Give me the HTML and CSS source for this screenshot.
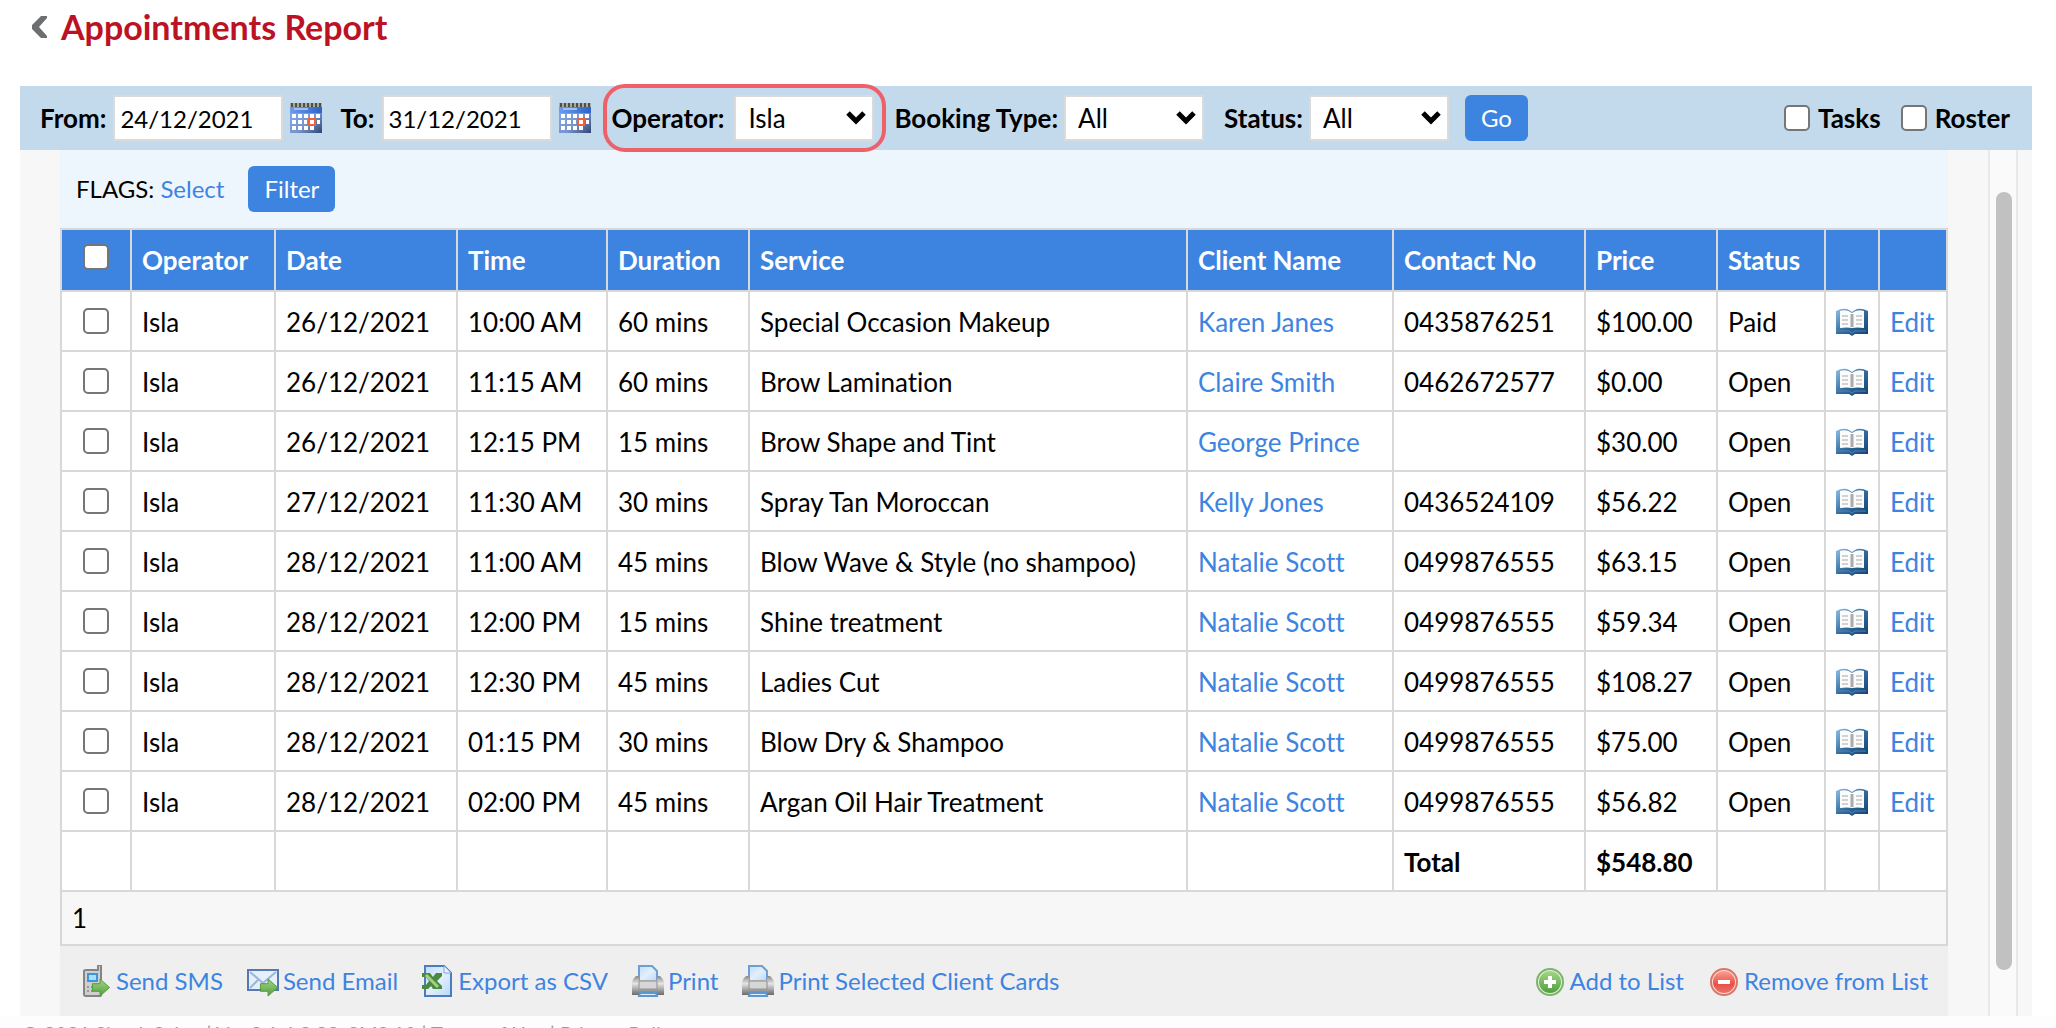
FILE: index.html
```html
<!DOCTYPE html>
<html lang="en">
<head>
    <meta charset="UTF-8">
    <meta name="viewport" content="width=device-width, initial-scale=1.0">
    <title>Appointments Report</title>
    <link rel="stylesheet" href="styles.css">
</head>
<body>
    <!-- shared icons -->
    <svg class="sprite" aria-hidden="true">
        <defs>
            <linearGradient id="g-blue" x1="0" y1="0" x2="1" y2="1">
                <stop offset="0" stop-color="#8fc0ea"/>
                <stop offset="0.5" stop-color="#346c9f"/>
                <stop offset="1" stop-color="#123f70"/>
            </linearGradient>
            <linearGradient id="g-cal" x1="0" y1="0" x2="1" y2="1">
                <stop offset="0" stop-color="#7fb0f0"/>
                <stop offset="0.6" stop-color="#7893cc"/>
                <stop offset="1" stop-color="#2f4573"/>
            </linearGradient>
            <linearGradient id="g-top" x1="0" y1="0" x2="1" y2="0">
                <stop offset="0" stop-color="#6c9cee"/>
                <stop offset="1" stop-color="#2c62cc"/>
            </linearGradient>
            <linearGradient id="g-page" x1="0" y1="0" x2="1" y2="1">
                <stop offset="0" stop-color="#c2dcf8"/>
                <stop offset="0.5" stop-color="#e2effd"/>
                <stop offset="1" stop-color="#b9d8f6"/>
            </linearGradient>
            <linearGradient id="g-grey" x1="0" y1="0" x2="0" y2="1">
                <stop offset="0" stop-color="#8a8a8a"/>
                <stop offset="0.4" stop-color="#e4e4e4"/>
                <stop offset="1" stop-color="#6a6a6a"/>
            </linearGradient>
            <linearGradient id="g-green" x1="0" y1="0" x2="0" y2="1">
                <stop offset="0" stop-color="#a5d685"/>
                <stop offset="1" stop-color="#4f9e40"/>
            </linearGradient>
            <linearGradient id="g-red" x1="0" y1="0" x2="0" y2="1">
                <stop offset="0" stop-color="#f8a090"/>
                <stop offset="0.6" stop-color="#ea4f48"/>
                <stop offset="1" stop-color="#e8746a"/>
            </linearGradient>
        </defs>
        <symbol id="i-calendar" viewBox="0 0 32 32">
            <rect y="2" width="32" height="29" fill="url(#g-cal)"/>
            <rect y="4" width="32" height="7" fill="url(#g-top)"/>
            <path d="M4 7h14" stroke="#9dc0f8" stroke-width="2"/>
            <path d="M0 3h32" stroke="#a9aba0" stroke-width="4"/>
            <path d="M1 3h31" stroke="#4d4f4c" stroke-width="4" stroke-dasharray="2 2"/>
            <path d="M2 14h4M8 14h4M14 14h4M20 14h4M26 14h4M2 20h4M8 20h4M14 20h3M27 20h3M2 26h4M8 26h4M14 26h4M20 26h4" stroke="#fff" stroke-width="4"/>
            <rect x="19" y="17" width="6" height="6" fill="#fff" stroke="#f0603c" stroke-width="2"/>
        </symbol>
        <symbol id="i-book" viewBox="0 0 32 28">
            <path d="M0 3q8-4 13-1l3 2 3-2q5-3 13 1v23H19l-3 2-3-2H0z" fill="url(#g-blue)"/>
            <path d="M4 3q7-2 12 2 5-4 12-2v17q-7-1-12 0-5-1-12 0z" fill="#fbfbfb"/>
            <path d="M16 6v13" stroke="#aaa" stroke-width="3"/>
            <path d="M6 8h6M6 12h6M6 16h6M20 8h6M20 12h6M20 16h6" stroke="#d2d2d2" stroke-width="2"/>
            <path d="M2 23h11l3 2 3-2h11" fill="none" stroke="#4f83b4" stroke-width="1"/>
        </symbol>
        <symbol id="i-arrow" viewBox="0 0 20 20">
            <path d="M1 6h8V1l10 9-10 9v-5H1z" fill="url(#g-green)" stroke="#4f9a3c" stroke-width="1"/>
        </symbol>
        <symbol id="i-sms" viewBox="0 0 32 32">
            <path d="M4 6q0-1 2-1h12V0h3v30q0 1-2 1H6q-2 0-2-2z" fill="#cfcfcf" stroke="#858585" stroke-width="2"/>
            <rect x="8" y="9" width="9" height="7" fill="#a6defc" stroke="#3a97df" stroke-width="2"/>
            <path d="M7 22h2M7 26h2M11 22h2M11 26h2" stroke="#999" stroke-width="2"/>
            <use href="#i-arrow" x="11" y="13" width="20" height="19"/>
        </symbol>
        <symbol id="i-email" viewBox="0 0 32 32">
            <rect x="1" y="5" width="30" height="20" fill="#e4f0fc" stroke="#5678b4" stroke-width="2"/>
            <path d="M3 7l13 11L29 7M3 23l9-9M29 23l-9-9" fill="none" stroke="#9db6d8" stroke-width="2"/>
            <use href="#i-arrow" x="12" y="13" width="20" height="19"/>
        </symbol>
        <symbol id="i-excel" viewBox="0 0 32 32">
            <path d="M3 1h19l7 7v23H3z" fill="url(#g-page)" stroke="#4a7cbf" stroke-width="2"/>
            <path d="M22 1v7h7" fill="#e8f3fe" stroke="#7ba6dc" stroke-width="1"/>
            <path d="M0 8h8l3 4 3-4h6v3l-5 5 5 5v3h-9l-2-3-3 3H0v-4h4l3-4-3-4H0z" fill="#4a8a3c"/>
            <path d="M4 10l12 12" stroke="#a5cf8a" stroke-width="3"/>
        </symbol>
        <symbol id="i-print" viewBox="0 0 32 32">
            <path d="M7 16V1h13l5 5v10z" fill="url(#g-page)" stroke="#6b9fd6" stroke-width="2"/>
            <path d="M4 11h3v4h18v-4h3q4 3 4 8v11H0V19q0-5 4-8z" fill="url(#g-grey)"/>
            <path d="M7 16h18v8H7z" fill="#d6d6d6" stroke="#909090" stroke-width="1"/>
            <path d="M8 28h16l1 3H7z" fill="#e3f0fc" stroke="#5b95d2" stroke-width="2"/>
        </symbol>
        <symbol id="i-add" viewBox="0 0 32 32">
            <circle cx="16" cy="17" r="13" fill="#e4f2dc" stroke="#7cb46e" stroke-width="2"/>
            <circle cx="16" cy="17" r="11" fill="url(#g-green)"/>
            <path d="M16 11v12M10 17h12" stroke="#fff" stroke-width="4"/>
        </symbol>
        <symbol id="i-remove" viewBox="0 0 32 32">
            <circle cx="16" cy="17" r="13" fill="#fbdcd6" stroke="#d8766c" stroke-width="2"/>
            <circle cx="16" cy="17" r="11" fill="url(#g-red)"/>
            <path d="M10 17h12" stroke="#fff" stroke-width="4"/>
        </symbol>
    </svg>

    <header class="page-head">
        <a class="back" href="#" aria-label="Back">
            <svg width="15" height="22" viewBox="0 0 15 22"><path d="M9 0h6v2L7 11l8 9v2H9L0 13V9z" fill="#6d6f71"/></svg>
        </a>
        <h1>Appointments Report</h1>
    </header>

    <form class="filter-bar">
        <div class="field date-field">
            <label for="from">From:</label>
            <input type="text" id="from" value="24/12/2021">
            <svg class="calendar"><use href="#i-calendar"/></svg>
        </div>
        <div class="field date-field">
            <label for="to">To:</label>
            <input type="text" id="to" value="31/12/2021">
            <svg class="calendar"><use href="#i-calendar"/></svg>
        </div>
        <div class="field ringed">
            <label for="operator">Operator:</label>
            <select id="operator"><option>Isla</option></select>
        </div>
        <div class="field booking">
            <label for="booking">Booking Type:</label>
            <select id="booking"><option>All</option></select>
        </div>
        <div class="field status">
            <label for="status">Status:</label>
            <select id="status"><option>All</option></select>
        </div>
        <button type="button" class="btn">Go</button>
        <div class="toggles">
            <label><input type="checkbox"> Tasks</label>
            <label><input type="checkbox"> Roster</label>
        </div>
    </form>

    <div class="panel">
        <main class="content">
            <div class="flags">
                <span>FLAGS: <a href="#">Select</a></span>
                <button type="button" class="btn">Filter</button>
            </div>

            <table class="report">
                <colgroup>
                    <col class="c-check">
                    <col class="c-operator">
                    <col class="c-date">
                    <col class="c-time">
                    <col class="c-duration">
                    <col>
                    <col class="c-client">
                    <col class="c-contact">
                    <col class="c-price">
                    <col class="c-status">
                    <col class="c-book">
                    <col class="c-edit">
                </colgroup>
                <thead>
                    <tr>
                        <th><input type="checkbox" aria-label="Select all"></th>
                        <th>Operator</th>
                        <th>Date</th>
                        <th>Time</th>
                        <th>Duration</th>
                        <th>Service</th>
                        <th>Client Name</th>
                        <th>Contact No</th>
                        <th>Price</th>
                        <th>Status</th>
                        <th></th>
                        <th></th>
                    </tr>
                </thead>
                <tbody id="rows"></tbody>
                <tfoot>
                    <tr class="total">
                        <td></td><td></td><td></td><td></td><td></td><td></td><td></td>
                        <td>Total</td>
                        <td>$548.80</td>
                        <td></td><td></td><td></td>
                    </tr>
                    <tr class="pager">
                        <td colspan="12">1</td>
                    </tr>
                </tfoot>
            </table>

            <div class="actions">
                <a href="#"><svg><use href="#i-sms"/></svg>Send SMS</a>
                <a href="#"><svg><use href="#i-email"/></svg>Send Email</a>
                <a href="#"><svg><use href="#i-excel"/></svg>Export as CSV</a>
                <a href="#"><svg><use href="#i-print"/></svg>Print</a>
                <a href="#"><svg><use href="#i-print"/></svg>Print Selected Client Cards</a>
                <div class="list-actions">
                    <a href="#"><svg><use href="#i-add"/></svg>Add to List</a>
                    <a href="#"><svg><use href="#i-remove"/></svg>Remove from List</a>
                </div>
            </div>
        </main>
        <div class="scroll-track"><div class="scroll-thumb"></div></div>
    </div>

    <footer class="page-foot">© 2021 SimpleSalon | Ver 2.1.6.2.22_SMS.10 | Terms of Use | Privacy Policy</footer>

    <script>
        const appointments = [
            ['26/12/2021', '10:00 AM', '60 mins', 'Special Occasion Makeup', 'Karen Janes', '0435876251', '$100.00', 'Paid'],
            ['26/12/2021', '11:15 AM', '60 mins', 'Brow Lamination', 'Claire Smith', '0462672577', '$0.00', 'Open'],
            ['26/12/2021', '12:15 PM', '15 mins', 'Brow Shape and Tint', 'George Prince', '', '$30.00', 'Open'],
            ['27/12/2021', '11:30 AM', '30 mins', 'Spray Tan Moroccan', 'Kelly Jones', '0436524109', '$56.22', 'Open'],
            ['28/12/2021', '11:00 AM', '45 mins', 'Blow Wave &amp; Style (no shampoo)', 'Natalie Scott', '0499876555', '$63.15', 'Open'],
            ['28/12/2021', '12:00 PM', '15 mins', 'Shine treatment', 'Natalie Scott', '0499876555', '$59.34', 'Open'],
            ['28/12/2021', '12:30 PM', '45 mins', 'Ladies Cut', 'Natalie Scott', '0499876555', '$108.27', 'Open'],
            ['28/12/2021', '01:15 PM', '30 mins', 'Blow Dry &amp; Shampoo', 'Natalie Scott', '0499876555', '$75.00', 'Open'],
            ['28/12/2021', '02:00 PM', '45 mins', 'Argan Oil Hair Treatment', 'Natalie Scott', '0499876555', '$56.82', 'Open']
        ]

        document.getElementById('rows').innerHTML = appointments.map(([date, time, duration, service, client, contact, price, status]) => `
            <tr>
                <td><input type="checkbox" aria-label="Select ${client}"></td>
                <td>Isla</td>
                <td>${date}</td>
                <td>${time}</td>
                <td>${duration}</td>
                <td>${service}</td>
                <td><a href="#">${client}</a></td>
                <td>${contact}</td>
                <td>${price}</td>
                <td>${status}</td>
                <td><svg class="book"><use href="#i-book"/></svg></td>
                <td><a href="#">Edit</a></td>
            </tr>`).join('')
    </script>
</body>
</html>
```

FILE: styles.css
```css
* {
    box-sizing: border-box;
}

body {
    margin: 0;
    height: 100vh;
    overflow: hidden;
    background: #fff;
    color: #000;
    font-family: Lato, "Liberation Sans", sans-serif;
    font-size: 26px;
    line-height: 32px;
    font-variant-ligatures: none;
}

a {
    color: #3d84e1;
    text-decoration: none;
}

input,
select,
button {
    font: inherit;
    color: inherit;
    margin: 0;
}

.sprite {
    position: absolute;
    width: 0;
    height: 0;
}

/* title */
.page-head {
    display: flex;
    align-items: center;
    gap: 14px;
    height: 86px;
    padding: 0 32px 32px;
}

.back svg {
    display: block;
}

h1 {
    margin: 0;
    font-size: 34px;
    line-height: 40px;
    font-weight: 700;
    color: #bc1324;
}

/* filters */
.filter-bar {
    display: flex;
    align-items: center;
    height: 64px;
    margin: 0 24px 0 20px;
    padding: 0 22px 0 20px;
    background: #c3daed;
    font-weight: 700;
    white-space: nowrap;
}

.field {
    display: flex;
    align-items: center;
    gap: 6px;
}

.date-field {
    gap: 7px;
    margin-right: 18px;
}

.field input,
.field select {
    height: 46px;
    border: 2px solid #dadada;
    border-radius: 0;
    background: #fff;
    font-weight: 400;
}

.field input {
    width: 170px;
    padding: 0 5px;
    font-size: 24px;
}

.field select {
    width: 140px;
    padding: 0 12px;
    appearance: none;
    background: #fff url("data:image/svg+xml,%3Csvg xmlns='http://www.w3.org/2000/svg' width='20' height='14'%3E%3Cpath d='M2 2l8 8 8-8' fill='none' stroke='%23000' stroke-width='5'/%3E%3C/svg%3E") no-repeat right 6px center;
}

.calendar {
    width: 32px;
    height: 32px;
}

.ringed {
    gap: 10px;
    height: 68px;
    margin: 0 8px 0 -6px;
    padding: 0 8px 0 5px;
    border: 4px solid #ef6168;
    border-radius: 22px;
    position: relative;
}

.booking {
    margin-right: 20px;
}

.status {
    margin-right: 16px;
}

.btn {
    height: 46px;
    padding: 0 16px;
    border: 0;
    border-radius: 6px;
    background: #3d84e1;
    color: #fff;
    font-size: 24px;
    font-weight: 400;
}

.toggles {
    display: flex;
    gap: 20px;
    margin-left: auto;
}

.toggles label {
    display: flex;
    align-items: center;
    gap: 8px;
}

input[type="checkbox"] {
    appearance: none;
    display: block;
    width: 26px;
    height: 26px;
    border: 2px solid #767676;
    border-radius: 5px;
    background: #fff;
}

/* report */
.panel {
    display: flex;
    margin: 0 24px 0 20px;
    padding: 0 14px 0 40px;
    background: #f7f7f7;
}

.content {
    flex: 1;
    margin-right: 40px;
    background: #edf5fd;
}

.flags {
    display: flex;
    align-items: center;
    gap: 24px;
    height: 78px;
    padding-left: 16px;
    font-size: 24px;
}

.report {
    width: 100%;
    table-layout: fixed;
    border-collapse: collapse;
    background: #fff;
}

.report th,
.report td {
    height: 60px;
    padding: 2px 10px 0;
    border: 2px solid #d8d8d8;
    text-align: left;
    white-space: nowrap;
}

.report th {
    height: 62px;
    padding-top: 0;
    background: #3d84e1;
    color: #fff;
}

.report th:first-child {
    padding-bottom: 6px;
}

.report td:first-child {
    padding-top: 0;
}

.report td:first-child input,
.report th:first-child input {
    margin: 0 auto;
}

.report .total td {
    font-weight: 700;
}

.report .pager td {
    height: 54px;
    background: #f7f7f7;
}

.c-check { width: 70px; }
.c-operator { width: 144px; }
.c-date { width: 182px; }
.c-time { width: 150px; }
.c-duration { width: 142px; }
.c-client { width: 206px; }
.c-contact { width: 192px; }
.c-price { width: 132px; }
.c-status { width: 108px; }
.c-book { width: 54px; }
.c-edit { width: 68px; }

.book {
    display: block;
    width: 32px;
    height: 28px;
}

.actions {
    display: flex;
    align-items: center;
    gap: 24px;
    height: 70px;
    padding: 0 20px;
    background: #efefef;
    font-size: 24px;
    white-space: nowrap;
}

.actions a {
    display: flex;
    align-items: center;
    gap: 4px;
}

.actions svg {
    width: 32px;
    height: 32px;
}

.list-actions {
    display: flex;
    gap: 24px;
    margin-left: auto;
}

.scroll-track {
    display: flex;
    width: 30px;
    padding: 42px 4px 46px 6px;
    border: solid #e8e8e8;
    border-width: 0 2px;
    background: #fafafa;
}

.scroll-thumb {
    flex: 1;
    border-radius: 8px;
    background: #c1c1c1;
}

.page-foot {
    padding: 5px 22px;
    background: #fdfdfd;
    color: #999;
    font-size: 20px;
    line-height: 24px;
}
```
